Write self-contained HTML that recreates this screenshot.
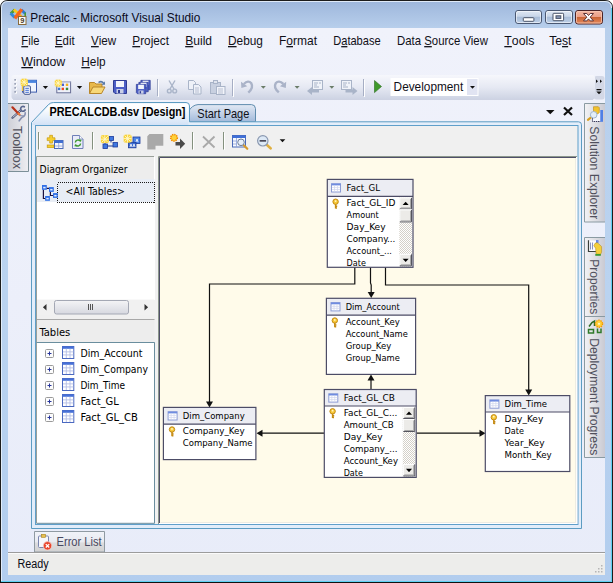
<!DOCTYPE html>
<html lang="en"><head><meta charset="utf-8"><title>Precalc - Microsoft Visual Studio</title>
<style>
html,body{margin:0;padding:0;background:#fff;overflow:hidden}
svg{display:block}
text{white-space:pre}
</style></head><body>
<svg width="613" height="583" viewBox="0 0 613 583">
<defs>
<linearGradient id="gFrame" x1="0" y1="0" x2="0" y2="1">
 <stop offset="0" stop-color="#9db6db"/><stop offset="0.048" stop-color="#b8cfec"/><stop offset="0.5" stop-color="#bad3f0"/><stop offset="1" stop-color="#b2cdee"/>
</linearGradient>
<linearGradient id="gClient" x1="0" y1="0" x2="0" y2="1">
 <stop offset="0" stop-color="#f0f2fb"/><stop offset="1" stop-color="#e8ecf9"/>
</linearGradient>
<linearGradient id="gTb" x1="0" y1="0" x2="0" y2="1">
 <stop offset="0" stop-color="#f6f7fc"/><stop offset="0.5" stop-color="#e6e9f3"/><stop offset="1" stop-color="#cdd3e3"/>
</linearGradient>
<linearGradient id="gBtn" x1="0" y1="0" x2="0" y2="1">
 <stop offset="0" stop-color="#dfe8f4"/><stop offset="0.45" stop-color="#c9d6e8"/><stop offset="0.5" stop-color="#a9bdd8"/><stop offset="1" stop-color="#bdd0e8"/>
</linearGradient>
<linearGradient id="gClose" x1="0" y1="0" x2="0" y2="1">
 <stop offset="0" stop-color="#f2b6a2"/><stop offset="0.48" stop-color="#eba088"/><stop offset="0.5" stop-color="#c96436"/><stop offset="1" stop-color="#e68a5c"/>
</linearGradient>
<linearGradient id="gTabA" x1="0" y1="0" x2="0" y2="1">
 <stop offset="0" stop-color="#ffffff"/><stop offset="0.25" stop-color="#fbfdff"/><stop offset="1" stop-color="#d2e2f6"/>
</linearGradient>
<linearGradient id="gTabI" x1="0" y1="0" x2="0" y2="1">
 <stop offset="0" stop-color="#e2e9f4"/><stop offset="0.5" stop-color="#c3d2e8"/><stop offset="1" stop-color="#a2badb"/>
</linearGradient>
<linearGradient id="gSide" x1="0" y1="0" x2="1" y2="0">
 <stop offset="0" stop-color="#f3f3f5"/><stop offset="1" stop-color="#c9cad3"/>
</linearGradient>
<linearGradient id="gSideL" x1="0" y1="0" x2="1" y2="0">
 <stop offset="0" stop-color="#cfd0d8"/><stop offset="1" stop-color="#eeeef2"/>
</linearGradient>
<linearGradient id="gThumb" x1="0" y1="0" x2="0" y2="1">
 <stop offset="0" stop-color="#f4f4f6"/><stop offset="1" stop-color="#d6d8e0"/>
</linearGradient>
<linearGradient id="gDocOuter" x1="0" y1="0" x2="0" y2="1"><stop offset="0" stop-color="#e4eefa"/><stop offset="1" stop-color="#e2edfa"/></linearGradient>
<linearGradient id="gErr" x1="0" y1="0" x2="0" y2="1"><stop offset="0" stop-color="#f1f3f9"/><stop offset="0.5" stop-color="#e9ebf1"/><stop offset="0.56" stop-color="#dcdcde"/><stop offset="1" stop-color="#d2d2d2"/></linearGradient>
<pattern id="pDither" width="2" height="2" patternUnits="userSpaceOnUse">
 <rect width="2" height="2" fill="#ffffff"/><rect width="1" height="1" fill="#d4d0c8"/><rect x="1" y="1" width="1" height="1" fill="#d4d0c8"/>
</pattern>
</defs>
<rect width="613" height="583" fill="#fff"/><path d="M0.5,583 V8 Q0.5,0.5 8,0.5 H605 Q612.5,0.5 612.5,8 V583 Z" fill="url(#gFrame)" stroke="#1c1c1c" stroke-width="1"/><path d="M1.5,581 V8 Q1.5,1.5 8,1.5 H605 Q611.5,1.5 611.5,8" fill="none" stroke="#e6f0fb" stroke-width="1" opacity="0.9"/><path d="M611.5,8 V581.5 H1" fill="none" stroke="#5fd0f2" stroke-width="1"/><rect x="0" y="582" width="613" height="1" fill="#111"/><g fill="none" stroke-linecap="butt">
<path d="M10.800,13.800 L14.800,9.800" stroke="#4f9a2c" stroke-width="2.800"/>
<path d="M13.800,9.600 L18,13.200" stroke="#f8c81c" stroke-width="2.800"/>
<path d="M10.600,13.200 L15,17.800" stroke="#2f8ada" stroke-width="2.800"/>
<path d="M21.200,9.800 L25.200,13.600" stroke="#2f7ad8" stroke-width="2.800"/>
<path d="M25.200,12.500 V16.500" stroke="#4f9a2c" stroke-width="1.600"/>
<path d="M19,14.500 L21.500,16.500" stroke="#f8a81c" stroke-width="2.400"/>
<path d="M21.800,9.200 L14.800,18.400" stroke="#f4641c" stroke-width="3.400"/>
</g>
<rect x="18.500" y="16.500" width="7.500" height="8" fill="#fbfaf6" stroke="#8a6a3a" stroke-width="1"/><text transform="translate(20.2,23.4) scale(1.0000,1)" font-family='"Liberation Sans", sans-serif' font-size="7.5" font-weight="bold" fill="#4a3a2a">9</text><text transform="translate(30.3,22) scale(0.9866,1)" font-family='"Liberation Sans", sans-serif' font-size="12" font-weight="normal" fill="#0a0a1a">Precalc - Microsoft Visual Studio</text><rect x="515.5" y="10.5" width="26" height="13" rx="2.5" fill="url(#gBtn)" stroke="#4a5872" stroke-width="1"/><rect x="516.5" y="11.5" width="24" height="11" rx="1.500" fill="none" stroke="#ffffff" stroke-opacity="0.55" stroke-width="1"/><rect x="545.5" y="10.5" width="27" height="13" rx="2.5" fill="url(#gBtn)" stroke="#4a5872" stroke-width="1"/><rect x="546.5" y="11.5" width="25" height="11" rx="1.500" fill="none" stroke="#ffffff" stroke-opacity="0.55" stroke-width="1"/><rect x="575.5" y="10.500" width="27" height="13.500" rx="2.500" fill="url(#gClose)" stroke="#4a2328" stroke-width="1"/><rect x="576.5" y="11.500" width="25" height="11.500" rx="1.500" fill="none" stroke="#f8c8b4" stroke-opacity="0.8" stroke-width="1"/><rect x="523.300" y="17.700" width="10.600" height="3.600" rx="0.800" fill="#fff" stroke="#4a5468" stroke-width="1"/><rect x="553" y="13.300" width="10.600" height="7.400" rx="0.800" fill="#fff" stroke="#4a5468" stroke-width="1"/><rect x="556" y="15.800" width="4.800" height="2.600" fill="#8a9ab8" stroke="#4a5468" stroke-width="1"/><path d="M583.500,13.500 h3.300 l1.700,2 1.700,-2 h3.300 l-3.300,3.700 3.300,3.700 h-3.300 l-1.700,-2 -1.700,2 h-3.300 l3.300,-3.700 Z" fill="#fff" stroke="#5a3236" stroke-width="1" stroke-linejoin="round"/><rect x="8" y="28" width="597" height="547" fill="url(#gClient)"/><text transform="translate(21.3,45) scale(0.8843,1)" font-family='"Liberation Sans", sans-serif' font-size="12.7" font-weight="normal" fill="#101018"><tspan text-decoration="underline">F</tspan>ile</text><text transform="translate(55,45) scale(0.8960,1)" font-family='"Liberation Sans", sans-serif' font-size="12.7" font-weight="normal" fill="#101018"><tspan text-decoration="underline">E</tspan>dit</text><text transform="translate(91,45) scale(0.9164,1)" font-family='"Liberation Sans", sans-serif' font-size="12.7" font-weight="normal" fill="#101018"><tspan text-decoration="underline">V</tspan>iew</text><text transform="translate(132.3,45) scale(0.9291,1)" font-family='"Liberation Sans", sans-serif' font-size="12.7" font-weight="normal" fill="#101018"><tspan text-decoration="underline">P</tspan>roject</text><text transform="translate(185.2,45) scale(0.9497,1)" font-family='"Liberation Sans", sans-serif' font-size="12.7" font-weight="normal" fill="#101018"><tspan text-decoration="underline">B</tspan>uild</text><text transform="translate(228,45) scale(0.9357,1)" font-family='"Liberation Sans", sans-serif' font-size="12.7" font-weight="normal" fill="#101018"><tspan text-decoration="underline">D</tspan>ebug</text><text transform="translate(279,45) scale(0.9452,1)" font-family='"Liberation Sans", sans-serif' font-size="12.7" font-weight="normal" fill="#101018">F<tspan text-decoration="underline">o</tspan>rmat</text><text transform="translate(333.2,45) scale(0.8743,1)" font-family='"Liberation Sans", sans-serif' font-size="12.7" font-weight="normal" fill="#101018">D<tspan text-decoration="underline">a</tspan>tabase</text><text transform="translate(397,45) scale(0.8979,1)" font-family='"Liberation Sans", sans-serif' font-size="12.7" font-weight="normal" fill="#101018">Data <tspan text-decoration="underline">S</tspan>ource View</text><text transform="translate(504.3,45) scale(0.9688,1)" font-family='"Liberation Sans", sans-serif' font-size="12.7" font-weight="normal" fill="#101018"><tspan text-decoration="underline">T</tspan>ools</text><text transform="translate(549.2,45) scale(0.9579,1)" font-family='"Liberation Sans", sans-serif' font-size="12.7" font-weight="normal" fill="#101018">Te<tspan text-decoration="underline">s</tspan>t</text><text transform="translate(21.3,66) scale(0.9747,1)" font-family='"Liberation Sans", sans-serif' font-size="12.7" font-weight="normal" fill="#101018"><tspan text-decoration="underline">W</tspan>indow</text><text transform="translate(81.3,66) scale(0.9307,1)" font-family='"Liberation Sans", sans-serif' font-size="12.7" font-weight="normal" fill="#101018"><tspan text-decoration="underline">H</tspan>elp</text><rect x="594" y="76" width="10.500" height="23.500" rx="2.500" fill="#d3d8e6"/><rect x="11.500" y="75" width="583.500" height="24.500" rx="3" fill="url(#gTb)"/><rect x="13" y="99" width="580" height="1" fill="#c3c9da" opacity="0.6"/><rect x="15" y="79.6" width="2" height="2" fill="#fff"/><rect x="14.300" y="79" width="1.700" height="1.700" fill="#9aa2b6"/><rect x="15" y="83.6" width="2" height="2" fill="#fff"/><rect x="14.300" y="83" width="1.700" height="1.700" fill="#9aa2b6"/><rect x="15" y="87.6" width="2" height="2" fill="#fff"/><rect x="14.300" y="87" width="1.700" height="1.700" fill="#9aa2b6"/><rect x="15" y="91.6" width="2" height="2" fill="#fff"/><rect x="14.300" y="91" width="1.700" height="1.700" fill="#9aa2b6"/><rect x="22.500" y="80.300" width="14" height="11.800" fill="#f1f5fd" stroke="#3d5cae" stroke-width="1"/><rect x="22.500" y="80.300" width="14" height="2.600" fill="#4a86e0"/><rect x="21.800" y="83" width="1.600" height="8" fill="#f4c83a"/><rect x="23.800" y="85.800" width="6.600" height="8.500" rx="1.200" fill="#f7f9fe" stroke="#44548a" stroke-width="1"/><path d="M25.300,88.300 h3.600 M25.300,90.300 h3.600 M25.300,92.300 h3.600" stroke="#3a6ad0" stroke-width="1"/><path d="M20.7,80.625 l1.9250000000000003,-1.9250000000000003 l1.575,0.3 l1.575,-0.3 l1.9250000000000003,1.9250000000000003 l0,3.15 l-1.9250000000000003,1.9250000000000003 l-3.15,0 Z" fill="#f9d33a"/><rect x="20.7" y="78.7" width="7.0" height="7.0" rx="1.300" fill="#f9d33a"/><path d="M24.2,78.7 v7.0 M20.7,82.2 h7.0 M21.4,79.4 l5.6000000000000005,5.6000000000000005 M27.0,79.4 l-5.6000000000000005,5.6000000000000005" stroke="#fff7c8" stroke-width="0.900" fill="none"/><path d="M42.8,86 h5.3 l-2.65,2.9499999999999997 Z" fill="#111"/><rect x="56.800" y="81.800" width="13.800" height="11" fill="#eff1f9" stroke="#6a6f96" stroke-width="1"/><path d="M57,81.800 H70.600" stroke="#c8cce0" stroke-width="1"/><rect x="61.600" y="83.600" width="2.400" height="2.400" fill="#4a5fd0"/><rect x="65.800" y="83.600" width="2.400" height="2.400" fill="#f0b020"/><rect x="57.900" y="87.700" width="2.400" height="2.400" fill="#3a78d8"/><rect x="61.600" y="87.700" width="2.400" height="2.400" fill="#f04a20"/><rect x="65.800" y="87.700" width="2.400" height="2.400" fill="#3a8a3a"/><path d="M54.800000000000004,81.57 l1.87,-1.87 l1.53,0.3 l1.53,-0.3 l1.87,1.87 l0,3.06 l-1.87,1.87 l-3.06,0 Z" fill="#f9d33a"/><rect x="54.800000000000004" y="79.69999999999999" width="6.8" height="6.8" rx="1.300" fill="#f9d33a"/><path d="M58.2,79.69999999999999 v6.8 M54.800000000000004,83.1 h6.8 M55.480000000000004,80.38 l5.44,5.44 M60.92,80.38 l-5.44,5.44" stroke="#fff7c8" stroke-width="0.900" fill="none"/><path d="M76.9,86 h5.3 l-2.65,2.9499999999999997 Z" fill="#111"/><path d="M89.500,93.500 V82.500 h5 l1.500,1.500 h6 v3" fill="#e8b84a" stroke="#b8862a" stroke-width="1"/><path d="M89.500,93.500 L93,87 H105 L101.500,93.500 Z" fill="#f8d878" stroke="#b8862a" stroke-width="1"/><path d="M98,82 q3.500,-2.500 6,0.500 l1,-1.200 v3.500 h-3.500 l1.300,-1.200 q-1.600,-1.800 -3.800,-0.600 Z" fill="#5a7aa8"/><g transform="translate(113,80) scale(1.0)"><path d="M0.500,0.500 H13.500 V13.500 H2 L0.500,12 Z" fill="#4c5fc6" stroke="#2f3c94" stroke-width="1"/><rect x="3" y="1" width="8" height="6" fill="#f2f5fb"/><rect x="3.500" y="9" width="7" height="4.500" fill="#c9d0e6"/><rect x="5" y="10" width="2" height="3" fill="#2f3c94"/></g><g transform="translate(140.5,80) scale(0.72)"><path d="M0.500,0.500 H13.500 V13.500 H2 L0.500,12 Z" fill="#4c5fc6" stroke="#2f3c94" stroke-width="1"/><rect x="3" y="1" width="8" height="6" fill="#f2f5fb"/><rect x="3.500" y="9" width="7" height="4.500" fill="#c9d0e6"/><rect x="5" y="10" width="2" height="3" fill="#2f3c94"/></g><g transform="translate(138.5,82) scale(0.72)"><path d="M0.500,0.500 H13.500 V13.500 H2 L0.500,12 Z" fill="#4c5fc6" stroke="#2f3c94" stroke-width="1"/><rect x="3" y="1" width="8" height="6" fill="#f2f5fb"/><rect x="3.500" y="9" width="7" height="4.500" fill="#c9d0e6"/><rect x="5" y="10" width="2" height="3" fill="#2f3c94"/></g><g transform="translate(136,84) scale(0.72)"><path d="M0.500,0.500 H13.500 V13.500 H2 L0.500,12 Z" fill="#4c5fc6" stroke="#2f3c94" stroke-width="1"/><rect x="3" y="1" width="8" height="6" fill="#f2f5fb"/><rect x="3.500" y="9" width="7" height="4.500" fill="#c9d0e6"/><rect x="5" y="10" width="2" height="3" fill="#2f3c94"/></g><path d="M157.5,79 V96" stroke="#a6aec4" stroke-width="1"/><path d="M158.5,80 V97" stroke="#fff" stroke-width="1"/><path d="M232.5,79 V96" stroke="#a6aec4" stroke-width="1"/><path d="M233.5,80 V97" stroke="#fff" stroke-width="1"/><path d="M363.5,79 V96" stroke="#a6aec4" stroke-width="1"/><path d="M364.5,80 V97" stroke="#fff" stroke-width="1"/><g stroke="#a9b4c8" fill="none" stroke-width="1.400"><path d="M169,80.500 L174,89 M175,80.500 L170,89"/><circle cx="169.300" cy="91" r="1.900"/><circle cx="174.700" cy="91" r="1.900"/></g><g fill="#eef1f8" stroke="#a9b4c8" stroke-width="1"><path d="M188.500,80.500 h5 l2,2 v7 h-7 Z"/><path d="M193.500,84.500 h5 l2.500,2.500 v7 h-7.500 Z"/></g><path d="M195,88 h4 M195,90 h4 M195,92 h4" stroke="#a9b4c8" stroke-width="0.800"/><g stroke="#a9b4c8" stroke-width="1"><rect x="210.500" y="82.500" width="10" height="11" fill="#c8d0e0"/><rect x="213.500" y="80.500" width="4" height="3" fill="#dfe4ee"/><rect x="216.500" y="86.500" width="8.500" height="8" fill="#f2f4fa"/></g><path d="M218,89 h5 M218,91 h5 M218,93 h5" stroke="#a9b4c8" stroke-width="0.800"/><path d="M248.300,92.600 Q253.800,87.500 251.300,83.300 Q248.300,79.600 243.800,84" fill="none" stroke="#aab3c8" stroke-width="2.400"/><path d="M241,81.800 L241.400,88 L247.300,86.300 Z" fill="#aab3c8"/><path d="M260.8,86 h5 l-2.5,2.8 Z" fill="#6a7c68"/><path d="M278.800,92.300 Q273.200,87.500 275.700,83.300 Q278.700,79.600 283.400,84" fill="none" stroke="#aab3c8" stroke-width="2.400"/><path d="M286.200,81.800 L285.800,88 L279.900,86.300 Z" fill="#aab3c8"/><path d="M294.6,86 h5 l-2.5,2.8 Z" fill="#6a7c68"/><g stroke="#a9b4c8" stroke-width="1"><rect x="312.500" y="80.500" width="10" height="9" fill="#f0f3f9"/></g><path d="M314,83 h4 M319,83 h2 M314,85 h3 M314,87 h5" stroke="#a9b4c8" stroke-width="1"/><path d="M307,91 l5,-4 v2.500 h7 v3 h-7 v2.500 Z" fill="#a9b4c8"/><path d="M329.3,86 h5 l-2.5,2.8 Z" fill="#6a7c68"/><g stroke="#a9b4c8" stroke-width="1"><rect x="341.500" y="80.500" width="10" height="9" fill="#f0f3f9"/></g><path d="M343,83 h4 M348,83 h2 M343,85 h3 M343,87 h5" stroke="#a9b4c8" stroke-width="1"/><path d="M357.500,91 l-5,-4 v2.500 h-7 v3 h7 v2.500 Z" fill="#a9b4c8"/><path d="M374.500,80.500 L381.500,86.500 L374.500,92.600 Z" fill="#3f9a2a" stroke="#2a6a1c" stroke-width="0.600"/><rect x="390.500" y="78" width="88" height="18" fill="#ffffff"/><rect x="467" y="79" width="10.500" height="16" fill="#e1e4f2"/><path d="M470,86 h5 l-2.5,2.8 Z" fill="#111"/><text transform="translate(393.6,91) scale(0.9463,1)" font-family='"Liberation Sans", sans-serif' font-size="12.5" font-weight="normal" fill="#101018">Development</text><path d="M596,79.500 l2,1.700 -2,1.700 Z M600,79.500 l2,1.700 -2,1.700 Z" fill="#111"/><rect x="596.500" y="89" width="5" height="1.300" fill="#111"/><path d="M596.300,91.500 h5.400 l-2.700,2.800 Z" fill="#111"/><rect x="8" y="103.500" width="20.500" height="67.500" fill="url(#gSideL)"/><path d="M8,103.500 H28.500 V171.500 H8" fill="none" stroke="#7c8f98" stroke-width="1"/><g fill="none" stroke-linecap="round"><path d="M12.500,117.700 L20.500,110.500" stroke="#3a4468" stroke-width="2.200"/><path d="M12.900,117.300 L20.500,110.500" stroke="#e8ecf6" stroke-width="0.900"/><path d="M24.300,106.800 a2.400,2.400 0 1 0 0.800,3.200" stroke="#5a6890" stroke-width="1.700"/><path d="M12.400,107.300 L18.500,113.700" stroke="#b8321a" stroke-width="2.200"/><path d="M18.300,113.500 L20,115.300" stroke="#f07a3a" stroke-width="2"/><path d="M25.200,112.800 q0.300,3 -3.400,4.600 L19.200,120.800" stroke="#8690b0" stroke-width="1.600"/><path d="M20,115.500 L24,116" stroke="#8690b0" stroke-width="1.200"/></g><text transform="translate(12.9,126) rotate(90) scale(1.0393,1)" font-family='"Liberation Sans", sans-serif' font-size="12" font-weight="normal" fill="#50505c">Toolbox</text><rect x="584.500" y="103.500" width="20.500" height="118.500" fill="url(#gSide)"/><path d="M605,103.500 H584.500 V222 H605" fill="none" stroke="#8a9aa2" stroke-width="1"/><rect x="584.500" y="237.500" width="20.500" height="220" fill="url(#gSide)"/><path d="M605,237.500 H584.500 V457.500 H605 M584.500,316.500 H605" fill="none" stroke="#8a9aa2" stroke-width="1"/><path d="M592.500,110.500 H600.500 V121.500 H592.500 Z" fill="#f6f7fc"/><path d="M592.500,116 V121.500 H600.500" fill="none" stroke="#3a3a5a" stroke-width="1" stroke-dasharray="1.500 0.700"/><rect x="600.300" y="110" width="2.700" height="11.800" fill="#4f7fe6"/><path d="M593.500,106.700 h4.800 l1,1 v5 l-1.500,1 h-4.300 Z" fill="#f2c32e" stroke="#b8861a" stroke-width="0.600"/><path d="M590.800,117.600 l-2.900,2.300" stroke="#d8a020" stroke-width="2" stroke-linecap="round"/><circle cx="593.700" cy="114.800" r="3.300" fill="#e3eef8" stroke="#9ab0c8" stroke-width="0.900"/><text transform="translate(589.8,126.3) rotate(90) scale(1.0176,1)" font-family='"Liberation Sans", sans-serif' font-size="12" font-weight="normal" fill="#50505c">Solution Explorer</text><rect x="588.500" y="240.500" width="7.500" height="11" fill="#fafbff"/><path d="M588.500,240.300 V251.500 H596" fill="none" stroke="#3a3f3a" stroke-width="1.200"/><path d="M590.500,242.500 v7 M592.500,242.500 v7" stroke="#8a94c0" stroke-width="1"/><rect x="596" y="240" width="2.500" height="3" fill="#6a8ae8"/><path d="M595.300,243 l2,-0.300 3.500,3 0.800,1 v5.500 l-1,2 h-4.500 l-0.500,-6 -1.800,-2.500 Z" fill="#f4cf3a" stroke="#a8801a" stroke-width="0.500"/><rect x="595.300" y="254" width="5.500" height="1.800" fill="#3f9a30"/><text transform="translate(589.8,259.3) rotate(90) scale(1.0054,1)" font-family='"Liberation Sans", sans-serif' font-size="12" font-weight="normal" fill="#50505c">Properties</text><path d="M589,326.500 l3,-4 2.500,-1.500 v5" stroke="#2f6a24" stroke-width="1.500" fill="none"/><path d="M588.500,329.500 h5 v3.500 h-5 Z" fill="none" stroke="#2f7a2a" stroke-width="1.500"/><path d="M597.500,328.500 v4 h3.500 v-4" fill="none" stroke="#2f7a2a" stroke-width="1.500"/><circle cx="599" cy="323.800" r="3.500" fill="#ffd23a" stroke="#f59a00" stroke-width="1.500" stroke-dasharray="1.300 0.900"/><circle cx="599" cy="323.800" r="1.100" fill="#fff6c0"/><text transform="translate(589.8,338.3) rotate(90) scale(1.0139,1)" font-family='"Liberation Sans", sans-serif' font-size="12" font-weight="normal" fill="#50505c">Deployment Progress</text><path d="M188,121.800 V112 Q192,105 198,104.600 H251.500 Q255.200,104.600 255.500,108.600 V121.800 Z" fill="url(#gTabI)" stroke="#5f8cae" stroke-width="1"/><path d="M31.500,528.500 V122.500 L48.500,104.500 Q50.500,102.500 53.500,102.500 H186 Q189.500,102.500 189.500,106 V121.800 H578.500 Q581.500,121.800 581.500,124.800 V528.500 Z" fill="url(#gDocOuter)" stroke="#5c9cc2" stroke-width="1"/><path d="M32.500,123 L49.300,105.200 Q51,103.500 53.500,103.500 H186 Q188.500,103.500 188.500,106 V125 H32.500 Z" fill="url(#gTabA)"/><text transform="translate(49.4,115.7) scale(0.8893,1)" font-family='"Liberation Sans", sans-serif' font-size="12.2" font-weight="bold" fill="#000">PRECALCDB.dsv [Design]</text><text transform="translate(197.3,117.6) scale(0.8966,1)" font-family='"Liberation Sans", sans-serif' font-size="12.3" font-weight="normal" fill="#101018">Start Page</text><path d="M546,110 h8.500 l-4.250,4.300 Z" fill="#111"/><path d="M564,107.500 L572,115 M572,107.500 L564,115" stroke="#111" stroke-width="2.200" fill="none"/><rect x="35.500" y="125.500" width="542.500" height="399" fill="#f0f0f0" stroke="#5f9fca" stroke-width="1"/><path d="M38.5,132 V149.5" stroke="#84917f" stroke-width="1"/><path d="M39.5,133 V150.0" stroke="#fff" stroke-width="1"/><path d="M92.5,132 V149.5" stroke="#84917f" stroke-width="1"/><path d="M93.5,133 V150.0" stroke="#fff" stroke-width="1"/><path d="M192.5,132 V149.5" stroke="#84917f" stroke-width="1"/><path d="M193.5,133 V150.0" stroke="#fff" stroke-width="1"/><path d="M223.5,132 V149.5" stroke="#84917f" stroke-width="1"/><path d="M224.5,133 V150.0" stroke="#fff" stroke-width="1"/><path d="M49.700,135.300 h2.800 v2.500 h2.500 v2.800 h-2.500 v2.500 h-2.800 v-2.500 h-2.500 v-2.800 h2.500 Z" fill="#f6cf2e" stroke="#c79a10" stroke-width="0.700"/><rect x="47.200" y="145" width="6.800" height="2.600" fill="#f6cf2e" stroke="#c79a10" stroke-width="0.700"/><rect x="54.500" y="140.500" width="8.500" height="8" fill="#f5f7fc" stroke="#4a6ab8" stroke-width="1"/><rect x="54.500" y="140.500" width="8.500" height="2.500" fill="#3f6fd2"/><path d="M58.700,143 v5.500 M55,146 h8" stroke="#8aa0d8" stroke-width="0.800"/><path d="M72.500,135.500 h7 l3.500,3.500 v9.500 h-10.500 Z" fill="#e9ecf9" stroke="#6f7fb8" stroke-width="1"/><path d="M79.500,135.500 v3.500 h3.500" fill="#fff" stroke="#6f7fb8" stroke-width="0.800"/><g fill="none" stroke="#3f9a30" stroke-width="1.400"><path d="M75.300,142.500 a2.700,2.700 0 0 1 4.800,-1.500"/><path d="M80.600,143.500 a2.700,2.700 0 0 1 -4.800,1.500"/></g><path d="M79,139.500 l2.600,0.300 -0.800,2.400Z M77,146.500 l-2.600,-0.300 0.800,-2.400Z" fill="#3f9a30"/><path d="M105,146 v-4 M107,146 h6 M111,140.500 v2" stroke="#1c3a9a" stroke-width="1" fill="none"/><g fill="#3f78e0" stroke="#1c3a9a" stroke-width="0.800"><rect x="109.500" y="136.500" width="4" height="4"/><rect x="113" y="142.500" width="4.500" height="4.500"/><rect x="103" y="144" width="4.500" height="4.500"/></g><path d="M100.89999999999999,137.445 l2.145,-2.145 l1.755,0.3 l1.755,-0.3 l2.145,2.145 l0,3.51 l-2.145,2.145 l-3.51,0 Z" fill="#f9d33a"/><rect x="100.89999999999999" y="135.29999999999998" width="7.8" height="7.8" rx="1.300" fill="#f9d33a"/><path d="M104.8,135.29999999999998 v7.8 M100.89999999999999,139.2 h7.8 M101.67999999999999,136.07999999999998 l6.24,6.24 M107.92,136.07999999999998 l-6.24,6.24" stroke="#fff7c8" stroke-width="0.900" fill="none"/><g stroke="#1c3a9a" stroke-width="0.800"><rect x="133" y="137" width="7" height="6.500" fill="#4f86e6"/><rect x="128.500" y="142.300" width="7.500" height="5.500" fill="#3f6fd2"/></g><path d="M130,147 l1,-3 1,3 M133,147 l1,-3 1,3 M136,142 l1,-3 1,3" stroke="#fff" stroke-width="0.800" fill="none"/><path d="M123.69999999999999,136.845 l2.145,-2.145 l1.755,0.3 l1.755,-0.3 l2.145,2.145 l0,3.51 l-2.145,2.145 l-3.51,0 Z" fill="#f9d33a"/><rect x="123.69999999999999" y="134.7" width="7.8" height="7.8" rx="1.300" fill="#f9d33a"/><path d="M127.6,134.7 v7.8 M123.69999999999999,138.6 h7.8 M124.47999999999999,135.48 l6.24,6.24 M130.72,135.48 l-6.24,6.24" stroke="#fff7c8" stroke-width="0.900" fill="none"/><path d="M149.500,134 H163.300 V145.800 H155.500 V149.500 H147.300 V136.200 Z" fill="#a9a9a9"/><circle cx="174" cy="137.800" r="3.300" fill="#ffd23a" stroke="#f08a00" stroke-width="1.600" stroke-dasharray="1.300 0.900"/><path d="M175.500,142 h4.500 v-3.500 l5.200,5.200 -5.200,5.200 v-3.500 h-4.500 Z" fill="#4a4a4a"/><path d="M203,136.500 L214.500,147.500 M214.500,136.500 L203,147.500" stroke="#a9a9a9" stroke-width="1.800" fill="none"/><rect x="232.500" y="135.500" width="13" height="11.500" fill="#f7f9fd" stroke="#4a6ab8" stroke-width="1"/><rect x="232.500" y="135.500" width="13" height="2.500" fill="#3f6fd8"/><path d="M236.500,138 v9 M233,141 h3.500 M233,144 h3.500" stroke="#8aa0d8" stroke-width="0.800"/><path d="M243.500,145 l3.800,3.800" stroke="#d89a2a" stroke-width="2.200" stroke-linecap="round"/><circle cx="241" cy="142.300" r="3.300" fill="#e6eef8" stroke="#6a7a98" stroke-width="1"/><path d="M266.500,144.500 l4.300,4" stroke="#e0b040" stroke-width="2.400" stroke-linecap="round"/><circle cx="262.800" cy="140.800" r="5.200" fill="#dde9f6" stroke="#8a98b0" stroke-width="1.200"/><rect x="259.600" y="140" width="6.500" height="1.700" fill="#4a4a5a"/><path d="M279.700,139.300 h5.600 l-2.800,3 Z" fill="#111"/><rect x="36" y="156.500" width="122" height="367" fill="#f0f0f0"/><rect x="37" y="157" width="117.500" height="142.800" fill="#ffffff"/><rect x="37" y="157" width="117.500" height="22" fill="#ededed"/><path d="M36.500,523 V156.500 H154" fill="none" stroke="#9aa09a" stroke-width="1"/><path d="M154.500,157 V300" stroke="#ffffff" stroke-width="1"/><text transform="translate(39.6,173) scale(0.9536,1)" font-family='"DejaVu Sans Condensed","DejaVu Sans","Liberation Sans", sans-serif' font-size="10.8" font-weight="normal" fill="#000">Diagram Organizer</text><rect x="37" y="179" width="117.500" height="23" fill="#e8edf5"/><rect x="57.500" y="182.500" width="97" height="20" fill="none" stroke="#1a1a1a" stroke-width="1" stroke-dasharray="1 1" shape-rendering="crispEdges"/><text transform="translate(65.6,195.4) scale(0.9671,1)" font-family='"DejaVu Sans Condensed","DejaVu Sans","Liberation Sans", sans-serif' font-size="10.8" font-weight="normal" fill="#000">&lt;All Tables&gt;</text><path d="M46.500,188.300 h3 M43.400,189.500 v9 h2 M50.400,191.500 v4 h3" stroke="#1a1040" stroke-width="1.200" fill="none"/><rect x="42" y="185" width="4.800" height="4.800" fill="#2f6fe6"/><rect x="43.2" y="186.8" width="2.400" height="1.600" fill="#dfeaff"/><rect x="49" y="187.1" width="4.800" height="4.800" fill="#2f6fe6"/><rect x="50.2" y="188.9" width="2.400" height="1.600" fill="#dfeaff"/><rect x="53" y="193.1" width="4.800" height="4.800" fill="#2f6fe6"/><rect x="54.2" y="194.9" width="2.400" height="1.600" fill="#dfeaff"/><rect x="45.1" y="196" width="4.800" height="4.800" fill="#2f6fe6"/><rect x="46.300000000000004" y="197.8" width="2.400" height="1.600" fill="#dfeaff"/><rect x="37" y="299.800" width="117.500" height="15.500" fill="#f1f1f1"/><rect x="54.500" y="300.500" width="74" height="13.500" rx="2" fill="url(#gThumb)" stroke="#a4a8b4" stroke-width="1"/><path d="M88.500,304 v6 M90.500,304 v6 M92.500,304 v6" stroke="#555" stroke-width="1"/><path d="M46.500,304 v6.400 l-3.600,-3.200 Z M144.500,304 v6.400 l3.600,-3.200 Z" fill="#333"/><rect x="37" y="319" width="117.500" height="23.500" fill="#ededed"/><path d="M37,319.500 H154.500 M37,342.500 H154.500" stroke="#a8a8a8" stroke-width="1" fill="none"/><text transform="translate(39.4,335.8) scale(1.0295,1)" font-family='"DejaVu Sans Condensed","DejaVu Sans","Liberation Sans", sans-serif' font-size="10.8" font-weight="normal" fill="#000">Tables</text><rect x="37" y="343" width="117.500" height="180" fill="#ffffff"/><path d="M36.500,342.500 H154.500 V523.300 H36.500" fill="none" stroke="#6a8e9e" stroke-width="1"/><rect x="45.500" y="349.5" width="8" height="8" rx="1" fill="#fcfcfc" stroke="#9a9a9a" stroke-width="1"/><path d="M47.500,353.5 h4 M49.500,351.5 v4" stroke="#26349a" stroke-width="1"/><g transform="translate(62,346)"><rect x="0.500" y="0.500" width="11.3" height="12" fill="#ffffff" stroke="#4a68c0" stroke-width="1"/><rect x="0.500" y="0.500" width="11.3" height="2.3" fill="#4670d8"/><path d="M4.3,2.8 V12 M8.0,2.8 V12 M1,5.87 H11.3 M1,8.93 H11.3" stroke="#b4bee6" stroke-width="0.9" fill="none"/></g><text transform="translate(80.4,357) scale(0.9748,1)" font-family='"DejaVu Sans Condensed","DejaVu Sans","Liberation Sans", sans-serif' font-size="10.8" font-weight="normal" fill="#000">Dim_Account</text><rect x="45.500" y="365.5" width="8" height="8" rx="1" fill="#fcfcfc" stroke="#9a9a9a" stroke-width="1"/><path d="M47.500,369.5 h4 M49.500,367.5 v4" stroke="#26349a" stroke-width="1"/><g transform="translate(62,362)"><rect x="0.500" y="0.500" width="11.3" height="12" fill="#ffffff" stroke="#4a68c0" stroke-width="1"/><rect x="0.500" y="0.500" width="11.3" height="2.3" fill="#4670d8"/><path d="M4.3,2.8 V12 M8.0,2.8 V12 M1,5.87 H11.3 M1,8.93 H11.3" stroke="#b4bee6" stroke-width="0.9" fill="none"/></g><text transform="translate(80.4,373) scale(0.9559,1)" font-family='"DejaVu Sans Condensed","DejaVu Sans","Liberation Sans", sans-serif' font-size="10.8" font-weight="normal" fill="#000">Dim_Company</text><rect x="45.500" y="381.5" width="8" height="8" rx="1" fill="#fcfcfc" stroke="#9a9a9a" stroke-width="1"/><path d="M47.500,385.5 h4 M49.500,383.5 v4" stroke="#26349a" stroke-width="1"/><g transform="translate(62,378)"><rect x="0.500" y="0.500" width="11.3" height="12" fill="#ffffff" stroke="#4a68c0" stroke-width="1"/><rect x="0.500" y="0.500" width="11.3" height="2.3" fill="#4670d8"/><path d="M4.3,2.8 V12 M8.0,2.8 V12 M1,5.87 H11.3 M1,8.93 H11.3" stroke="#b4bee6" stroke-width="0.9" fill="none"/></g><text transform="translate(80.4,389) scale(0.9285,1)" font-family='"DejaVu Sans Condensed","DejaVu Sans","Liberation Sans", sans-serif' font-size="10.8" font-weight="normal" fill="#000">Dim_Time</text><rect x="45.500" y="397.5" width="8" height="8" rx="1" fill="#fcfcfc" stroke="#9a9a9a" stroke-width="1"/><path d="M47.500,401.5 h4 M49.500,399.5 v4" stroke="#26349a" stroke-width="1"/><g transform="translate(62,394)"><rect x="0.500" y="0.500" width="11.3" height="12" fill="#ffffff" stroke="#4a68c0" stroke-width="1"/><rect x="0.500" y="0.500" width="11.3" height="2.3" fill="#4670d8"/><path d="M4.3,2.8 V12 M8.0,2.8 V12 M1,5.87 H11.3 M1,8.93 H11.3" stroke="#b4bee6" stroke-width="0.9" fill="none"/></g><text transform="translate(80.4,405) scale(1.0267,1)" font-family='"DejaVu Sans Condensed","DejaVu Sans","Liberation Sans", sans-serif' font-size="10.8" font-weight="normal" fill="#000">Fact_GL</text><rect x="45.500" y="413.5" width="8" height="8" rx="1" fill="#fcfcfc" stroke="#9a9a9a" stroke-width="1"/><path d="M47.500,417.5 h4 M49.500,415.5 v4" stroke="#26349a" stroke-width="1"/><g transform="translate(62,410)"><rect x="0.500" y="0.500" width="11.3" height="12" fill="#ffffff" stroke="#4a68c0" stroke-width="1"/><rect x="0.500" y="0.500" width="11.3" height="2.3" fill="#4670d8"/><path d="M4.3,2.8 V12 M8.0,2.8 V12 M1,5.87 H11.3 M1,8.93 H11.3" stroke="#b4bee6" stroke-width="0.9" fill="none"/></g><text transform="translate(80.4,421) scale(1.0323,1)" font-family='"DejaVu Sans Condensed","DejaVu Sans","Liberation Sans", sans-serif' font-size="10.8" font-weight="normal" fill="#000">Fact_GL_CB</text><rect x="155" y="156" width="3" height="368" fill="#f1f1f1"/><rect x="158" y="156" width="419" height="368" fill="#fffbea"/><path d="M158.500,524 V156.500 H577" fill="none" stroke="#8c978c" stroke-width="1"/><path d="M159.500,523 V157.500 H576" fill="none" stroke="#4f4f68" stroke-width="1"/><path d="M576.700,157 V523.500 H159" fill="none" stroke="#ffffff" stroke-width="1.200"/><path d="M575.600,158.500 V522.500 H160.500" fill="none" stroke="#ecebe2" stroke-width="1"/><g fill="none" stroke="#111" stroke-width="1.200"><path d="M354.800,267 V284 H209.500 V402"/><path d="M370.500,267 V283 L371.200,285 V293"/><path d="M385.500,267 V285 H528.700 V390"/><path d="M371,389.500 V380"/><path d="M324,433.200 H262"/><path d="M416.500,433.200 H480"/></g><g fill="#111"><path d="M206,401.500 h7 l-3.500,6 Z"/><path d="M367.700,292 h7 l-3.500,6 Z"/><path d="M525.200,389.500 h7 l-3.500,6 Z"/><path d="M367.500,380.500 h7 l-3.500,-6 Z"/><path d="M262.500,429.700 v7 l-6,-3.500 Z"/><path d="M479.500,429.700 v7 l6,-3.500 Z"/></g><rect x="327.3" y="179.4" width="85.69999999999999" height="87.9" fill="#ffffff"/><rect x="327.3" y="179.4" width="85.69999999999999" height="17.0" fill="#ecedf3"/><clipPath id="cp3452"><rect x="327.3" y="179.4" width="85.69999999999999" height="87.60000000000001"/></clipPath><g clip-path="url(#cp3452)"><g transform="translate(331,183.20000000000002)"><rect x="0.500" y="0.500" width="9" height="8.3" fill="#ffffff" stroke="#8c9cd4" stroke-width="1"/><rect x="0.500" y="0.500" width="9" height="1.7" fill="#6f8ce0"/><path d="M3.53,2.2 V8.3 M6.47,2.2 V8.3 M1,4.23 H9 M1,6.27 H9" stroke="#d0d5ec" stroke-width="0.7" fill="none"/></g><text transform="translate(346.6,190.9) scale(1.0121,1)" font-family='"DejaVu Sans Condensed","DejaVu Sans","Liberation Sans", sans-serif' font-size="9.5" font-weight="normal" fill="#000">Fact_GL</text><text transform="translate(346.6,206.1) scale(1.0548,1)" font-family='"DejaVu Sans Condensed","DejaVu Sans","Liberation Sans", sans-serif' font-size="9.5" font-weight="normal" fill="#000">Fact_GL_ID</text><text transform="translate(346.6,218.1) scale(0.9585,1)" font-family='"DejaVu Sans Condensed","DejaVu Sans","Liberation Sans", sans-serif' font-size="9.5" font-weight="normal" fill="#000">Amount</text><text transform="translate(346.6,230.1) scale(1.0680,1)" font-family='"DejaVu Sans Condensed","DejaVu Sans","Liberation Sans", sans-serif' font-size="9.5" font-weight="normal" fill="#000">Day_Key</text><text transform="translate(346.6,242.1) scale(1.0305,1)" font-family='"DejaVu Sans Condensed","DejaVu Sans","Liberation Sans", sans-serif' font-size="9.5" font-weight="normal" fill="#000">Company...</text><text transform="translate(346.6,254.1) scale(0.9679,1)" font-family='"DejaVu Sans Condensed","DejaVu Sans","Liberation Sans", sans-serif' font-size="9.5" font-weight="normal" fill="#000">Account_...</text><text transform="translate(346.6,266.1) scale(0.9492,1)" font-family='"DejaVu Sans Condensed","DejaVu Sans","Liberation Sans", sans-serif' font-size="9.5" font-weight="normal" fill="#000">Date</text><g transform="translate(332.3,198.70000000000002)"><circle cx="3.300" cy="3" r="2.700" fill="#f7c93a" stroke="#c48a12" stroke-width="1"/><circle cx="3.300" cy="2.400" r="0.900" fill="#fff6c8"/><path d="M3.300,5.500 V9.800 M3.300,7.500 h1.600 M3.300,9.300 h1.400" stroke="#c48a12" stroke-width="1.500" fill="none"/></g><rect x="399.3" y="197.4" width="12.699999999999989" height="69.4" fill="url(#pDither)"/><rect x="399.3" y="197.4" width="12.699999999999989" height="12" fill="#ecebe8"/><path d="M399.8,208.9 V197.9 H411.5" fill="none" stroke="#fff" stroke-width="1"/><path d="M411.5,197.9 V208.9 H399.8" fill="none" stroke="#55555f" stroke-width="1"/><path d="M410.5,198.9 V207.9 H400.8" fill="none" stroke="#a8a8a8" stroke-width="1"/><path d="M402.65,205.1 h6 l-3,-3.300 Z" fill="#000"/><rect x="399.3" y="209.4" width="12.699999999999989" height="13" fill="#ecebe8"/><path d="M399.8,221.9 V209.9 H411.5" fill="none" stroke="#fff" stroke-width="1"/><path d="M411.5,209.9 V221.9 H399.8" fill="none" stroke="#55555f" stroke-width="1"/><path d="M410.5,210.9 V220.9 H400.8" fill="none" stroke="#a8a8a8" stroke-width="1"/><rect x="399.3" y="253.8" width="12.699999999999989" height="12.5" fill="#ecebe8"/><path d="M399.8,265.8 V254.3 H411.5" fill="none" stroke="#fff" stroke-width="1"/><path d="M411.5,254.3 V265.8 H399.8" fill="none" stroke="#55555f" stroke-width="1"/><path d="M410.5,255.3 V264.8 H400.8" fill="none" stroke="#a8a8a8" stroke-width="1"/><path d="M402.65,258.75 h6 l-3,3.300 Z" fill="#000"/></g><rect x="327.3" y="179.4" width="85.69999999999999" height="87.9" fill="none" stroke="#4c4c66" stroke-width="1.200"/><path d="M327.3,196.4 H413" stroke="#4c4c66" stroke-width="1.200"/><rect x="326.4" y="298.3" width="89.20000000000005" height="76.09999999999997" fill="#ffffff"/><rect x="326.4" y="298.3" width="89.20000000000005" height="16.899999999999977" fill="#ecedf3"/><clipPath id="cp3562"><rect x="326.4" y="298.3" width="89.20000000000005" height="75.79999999999997"/></clipPath><g clip-path="url(#cp3562)"><g transform="translate(330.5,302.1)"><rect x="0.500" y="0.500" width="9" height="8.3" fill="#ffffff" stroke="#8c9cd4" stroke-width="1"/><rect x="0.500" y="0.500" width="9" height="1.7" fill="#6f8ce0"/><path d="M3.53,2.2 V8.3 M6.47,2.2 V8.3 M1,4.23 H9 M1,6.27 H9" stroke="#d0d5ec" stroke-width="0.7" fill="none"/></g><text transform="translate(345.7,309.8) scale(0.9653,1)" font-family='"DejaVu Sans Condensed","DejaVu Sans","Liberation Sans", sans-serif' font-size="9.5" font-weight="normal" fill="#000">Dim_Account</text><text transform="translate(345.7,324.9) scale(0.9978,1)" font-family='"DejaVu Sans Condensed","DejaVu Sans","Liberation Sans", sans-serif' font-size="9.5" font-weight="normal" fill="#000">Account_Key</text><text transform="translate(345.7,336.9) scale(0.9705,1)" font-family='"DejaVu Sans Condensed","DejaVu Sans","Liberation Sans", sans-serif' font-size="9.5" font-weight="normal" fill="#000">Account_Name</text><text transform="translate(345.7,348.9) scale(0.9952,1)" font-family='"DejaVu Sans Condensed","DejaVu Sans","Liberation Sans", sans-serif' font-size="9.5" font-weight="normal" fill="#000">Group_Key</text><text transform="translate(345.7,360.9) scale(0.9748,1)" font-family='"DejaVu Sans Condensed","DejaVu Sans","Liberation Sans", sans-serif' font-size="9.5" font-weight="normal" fill="#000">Group_Name</text><g transform="translate(331.5,317.5)"><circle cx="3.300" cy="3" r="2.700" fill="#f7c93a" stroke="#c48a12" stroke-width="1"/><circle cx="3.300" cy="2.400" r="0.900" fill="#fff6c8"/><path d="M3.300,5.500 V9.800 M3.300,7.500 h1.600 M3.300,9.300 h1.400" stroke="#c48a12" stroke-width="1.500" fill="none"/></g></g><rect x="326.4" y="298.3" width="89.20000000000005" height="76.09999999999997" fill="none" stroke="#4c4c66" stroke-width="1.200"/><path d="M326.4,315.2 H415.6" stroke="#4c4c66" stroke-width="1.200"/><rect x="324.3" y="389.5" width="91.89999999999998" height="87.89999999999998" fill="#ffffff"/><rect x="324.3" y="389.5" width="91.89999999999998" height="16.5" fill="#ecedf3"/><clipPath id="cp3632"><rect x="324.3" y="389.5" width="91.89999999999998" height="87.59999999999998"/></clipPath><g clip-path="url(#cp3632)"><g transform="translate(328.3,393.3)"><rect x="0.500" y="0.500" width="9" height="8.3" fill="#ffffff" stroke="#8c9cd4" stroke-width="1"/><rect x="0.500" y="0.500" width="9" height="1.7" fill="#6f8ce0"/><path d="M3.53,2.2 V8.3 M6.47,2.2 V8.3 M1,4.23 H9 M1,6.27 H9" stroke="#d0d5ec" stroke-width="0.7" fill="none"/></g><text transform="translate(343.7,401.0) scale(1.0449,1)" font-family='"DejaVu Sans Condensed","DejaVu Sans","Liberation Sans", sans-serif' font-size="9.5" font-weight="normal" fill="#000">Fact_GL_CB</text><text transform="translate(343.7,415.7) scale(1.0472,1)" font-family='"DejaVu Sans Condensed","DejaVu Sans","Liberation Sans", sans-serif' font-size="9.5" font-weight="normal" fill="#000">Fact_GL_C...</text><text transform="translate(343.7,427.7) scale(1.0080,1)" font-family='"DejaVu Sans Condensed","DejaVu Sans","Liberation Sans", sans-serif' font-size="9.5" font-weight="normal" fill="#000">Amount_CB</text><text transform="translate(343.7,439.7) scale(1.0626,1)" font-family='"DejaVu Sans Condensed","DejaVu Sans","Liberation Sans", sans-serif' font-size="9.5" font-weight="normal" fill="#000">Day_Key</text><text transform="translate(343.7,451.7) scale(1.0136,1)" font-family='"DejaVu Sans Condensed","DejaVu Sans","Liberation Sans", sans-serif' font-size="9.5" font-weight="normal" fill="#000">Company_...</text><text transform="translate(343.7,463.7) scale(1.0015,1)" font-family='"DejaVu Sans Condensed","DejaVu Sans","Liberation Sans", sans-serif' font-size="9.5" font-weight="normal" fill="#000">Account_Key</text><text transform="translate(343.7,475.7) scale(0.9394,1)" font-family='"DejaVu Sans Condensed","DejaVu Sans","Liberation Sans", sans-serif' font-size="9.5" font-weight="normal" fill="#000">Date</text><g transform="translate(329.3,408.3)"><circle cx="3.300" cy="3" r="2.700" fill="#f7c93a" stroke="#c48a12" stroke-width="1"/><circle cx="3.300" cy="2.400" r="0.900" fill="#fff6c8"/><path d="M3.300,5.500 V9.800 M3.300,7.500 h1.600 M3.300,9.300 h1.400" stroke="#c48a12" stroke-width="1.500" fill="none"/></g><rect x="402.8" y="407" width="12.399999999999977" height="69.89999999999998" fill="url(#pDither)"/><rect x="402.8" y="407" width="12.399999999999977" height="12" fill="#ecebe8"/><path d="M403.3,418.5 V407.5 H414.7" fill="none" stroke="#fff" stroke-width="1"/><path d="M414.7,407.5 V418.5 H403.3" fill="none" stroke="#55555f" stroke-width="1"/><path d="M413.7,408.5 V417.5 H404.3" fill="none" stroke="#a8a8a8" stroke-width="1"/><path d="M406.0,414.7 h6 l-3,-3.300 Z" fill="#000"/><rect x="402.8" y="419" width="12.399999999999977" height="13" fill="#ecebe8"/><path d="M403.3,431.5 V419.5 H414.7" fill="none" stroke="#fff" stroke-width="1"/><path d="M414.7,419.5 V431.5 H403.3" fill="none" stroke="#55555f" stroke-width="1"/><path d="M413.7,420.5 V430.5 H404.3" fill="none" stroke="#a8a8a8" stroke-width="1"/><rect x="402.8" y="463.9" width="12.399999999999977" height="12.5" fill="#ecebe8"/><path d="M403.3,475.9 V464.4 H414.7" fill="none" stroke="#fff" stroke-width="1"/><path d="M414.7,464.4 V475.9 H403.3" fill="none" stroke="#55555f" stroke-width="1"/><path d="M413.7,465.4 V474.9 H404.3" fill="none" stroke="#a8a8a8" stroke-width="1"/><path d="M406.0,468.84999999999997 h6 l-3,3.300 Z" fill="#000"/></g><rect x="324.3" y="389.5" width="91.89999999999998" height="87.89999999999998" fill="none" stroke="#4c4c66" stroke-width="1.200"/><path d="M324.3,406 H416.2" stroke="#4c4c66" stroke-width="1.200"/><rect x="163.4" y="407.4" width="92.5" height="52.200000000000045" fill="#ffffff"/><rect x="163.4" y="407.4" width="92.5" height="16.80000000000001" fill="#ecedf3"/><clipPath id="cp2041"><rect x="163.4" y="407.4" width="92.5" height="51.90000000000005"/></clipPath><g clip-path="url(#cp2041)"><g transform="translate(167.6,411.2)"><rect x="0.500" y="0.500" width="9" height="8.3" fill="#ffffff" stroke="#8c9cd4" stroke-width="1"/><rect x="0.500" y="0.500" width="9" height="1.7" fill="#6f8ce0"/><path d="M3.53,2.2 V8.3 M6.47,2.2 V8.3 M1,4.23 H9 M1,6.27 H9" stroke="#d0d5ec" stroke-width="0.7" fill="none"/></g><text transform="translate(182.8,418.9) scale(0.9949,1)" font-family='"DejaVu Sans Condensed","DejaVu Sans","Liberation Sans", sans-serif' font-size="9.5" font-weight="normal" fill="#000">Dim_Company</text><text transform="translate(182.8,433.9) scale(1.0250,1)" font-family='"DejaVu Sans Condensed","DejaVu Sans","Liberation Sans", sans-serif' font-size="9.5" font-weight="normal" fill="#000">Company_Key</text><text transform="translate(182.8,445.9) scale(0.9963,1)" font-family='"DejaVu Sans Condensed","DejaVu Sans","Liberation Sans", sans-serif' font-size="9.5" font-weight="normal" fill="#000">Company_Name</text><g transform="translate(168.7,426.5)"><circle cx="3.300" cy="3" r="2.700" fill="#f7c93a" stroke="#c48a12" stroke-width="1"/><circle cx="3.300" cy="2.400" r="0.900" fill="#fff6c8"/><path d="M3.300,5.500 V9.800 M3.300,7.500 h1.600 M3.300,9.300 h1.400" stroke="#c48a12" stroke-width="1.500" fill="none"/></g></g><rect x="163.4" y="407.4" width="92.5" height="52.200000000000045" fill="none" stroke="#4c4c66" stroke-width="1.200"/><path d="M163.4,424.2 H255.9" stroke="#4c4c66" stroke-width="1.200"/><rect x="485.3" y="395.6" width="84.49999999999994" height="75.89999999999998" fill="#ffffff"/><rect x="485.3" y="395.6" width="84.49999999999994" height="16.399999999999977" fill="#ecedf3"/><clipPath id="cp5248"><rect x="485.3" y="395.6" width="84.49999999999994" height="75.59999999999998"/></clipPath><g clip-path="url(#cp5248)"><g transform="translate(489.4,399.40000000000003)"><rect x="0.500" y="0.500" width="9" height="8.3" fill="#ffffff" stroke="#8c9cd4" stroke-width="1"/><rect x="0.500" y="0.500" width="9" height="1.7" fill="#6f8ce0"/><path d="M3.53,2.2 V8.3 M6.47,2.2 V8.3 M1,4.23 H9 M1,6.27 H9" stroke="#d0d5ec" stroke-width="0.7" fill="none"/></g><text transform="translate(504.6,407.1) scale(0.9987,1)" font-family='"DejaVu Sans Condensed","DejaVu Sans","Liberation Sans", sans-serif' font-size="9.5" font-weight="normal" fill="#000">Dim_Time</text><text transform="translate(504.6,421.7) scale(1.0571,1)" font-family='"DejaVu Sans Condensed","DejaVu Sans","Liberation Sans", sans-serif' font-size="9.5" font-weight="normal" fill="#000">Day_Key</text><text transform="translate(504.6,433.7) scale(0.9492,1)" font-family='"DejaVu Sans Condensed","DejaVu Sans","Liberation Sans", sans-serif' font-size="9.5" font-weight="normal" fill="#000">Date</text><text transform="translate(504.6,445.7) scale(1.0614,1)" font-family='"DejaVu Sans Condensed","DejaVu Sans","Liberation Sans", sans-serif' font-size="9.5" font-weight="normal" fill="#000">Year_Key</text><text transform="translate(504.6,457.7) scale(1.0126,1)" font-family='"DejaVu Sans Condensed","DejaVu Sans","Liberation Sans", sans-serif' font-size="9.5" font-weight="normal" fill="#000">Month_Key</text><g transform="translate(490.5,414.3)"><circle cx="3.300" cy="3" r="2.700" fill="#f7c93a" stroke="#c48a12" stroke-width="1"/><circle cx="3.300" cy="2.400" r="0.900" fill="#fff6c8"/><path d="M3.300,5.500 V9.800 M3.300,7.500 h1.600 M3.300,9.300 h1.400" stroke="#c48a12" stroke-width="1.500" fill="none"/></g></g><rect x="485.3" y="395.6" width="84.49999999999994" height="75.89999999999998" fill="none" stroke="#4c4c66" stroke-width="1.200"/><path d="M485.3,412 H569.8" stroke="#4c4c66" stroke-width="1.200"/><path d="M34.500,531.500 H104.500 V552 H34.500 Z" fill="url(#gErr)" stroke="#8f9aa2" stroke-width="1"/><rect x="38.500" y="536" width="10" height="11.500" rx="1" fill="#f6f7fb" stroke="#7a86b0" stroke-width="1"/><rect x="41.500" y="534.300" width="4" height="3" fill="#e8c050" stroke="#a88420" stroke-width="0.600"/><circle cx="47.500" cy="545.800" r="4.200" fill="#e8452c" stroke="#f6d0c8" stroke-width="0.700"/><path d="M45.800,544.100 l3.400,3.400 M49.200,544.100 l-3.400,3.400" stroke="#fff" stroke-width="1.300"/><text transform="translate(56.5,545.8) scale(0.9284,1)" font-family='"Liberation Sans", sans-serif' font-size="12" font-weight="normal" fill="#484860">Error List</text><rect x="8" y="552" width="597" height="23" fill="#ededeb"/><path d="M8,552.500 H605" stroke="#9c9c9c" stroke-width="1"/><path d="M8,553.500 H605" stroke="#fbfbfb" stroke-width="1"/><text transform="translate(17.5,568.3) scale(0.8995,1)" font-family='"Liberation Sans", sans-serif' font-size="12" font-weight="normal" fill="#0a0a14">Ready</text><rect x="601" y="571" width="1.500" height="1.500" fill="#b5b5b5"/><rect x="598" y="571" width="1.500" height="1.500" fill="#b5b5b5"/><rect x="595" y="571" width="1.500" height="1.500" fill="#b5b5b5"/><rect x="601" y="568" width="1.500" height="1.500" fill="#b5b5b5"/><rect x="598" y="568" width="1.500" height="1.500" fill="#b5b5b5"/><rect x="601" y="565" width="1.500" height="1.500" fill="#b5b5b5"/>
</svg>
</body></html>
